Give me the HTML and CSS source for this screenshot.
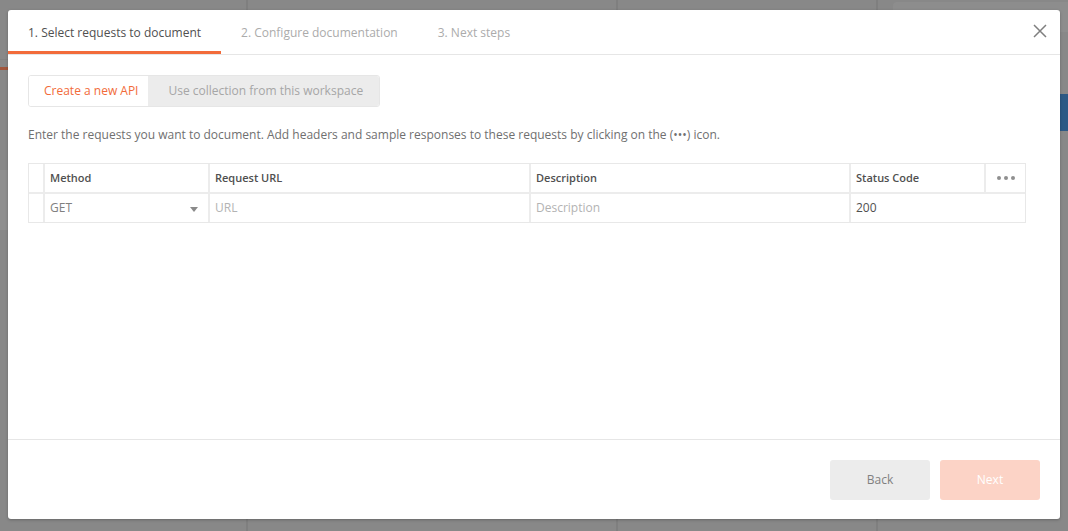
FILE: index.html
```html
<!DOCTYPE html>
<html>
<head>
<meta charset="utf-8">
<link rel="stylesheet" href="styles.css">
</head>
<body>
<div class="app">
  <div class="col col-a">
    <div class="col-a-top"></div>
    <div class="col-a-accent"></div>
    <div class="col-a-band"></div>
  </div>
  <div class="col col-b"></div>
  <div class="col col-c"></div>
  <div class="col col-d">
    <div class="col-d-top"></div>
    <div class="col-d-blue"></div>
  </div>
</div>

<div class="modal">
  <div class="tabs">
    <div class="tab active">1. Select requests to document</div>
    <div class="tab">2. Configure documentation</div>
    <div class="tab">3. Next steps</div>
    <button class="close" aria-label="Close">
      <svg width="14" height="14" viewBox="0 0 14 14"><path d="M1 1L13 13M13 1L1 13" stroke="#7f7f7f" stroke-width="1.5" fill="none"/></svg>
    </button>
  </div>
  <div class="content">
    <div class="toggle">
      <div class="toggle-btn on">Create a new API</div>
      <div class="toggle-btn off">Use collection from this workspace</div>
    </div>
    <p class="hint">Enter the requests you want to document. Add headers and sample responses to these requests by clicking on the (•••) icon.</p>
    <div class="grid">
      <div class="cell"></div>
      <div class="cell head">Method</div>
      <div class="cell head">Request URL</div>
      <div class="cell head">Description</div>
      <div class="cell head">Status Code</div>
      <div class="cell head dots"><span></span><span></span><span></span></div>

      <div class="cell"></div>
      <div class="cell val method">GET<span class="caret"></span></div>
      <div class="cell ph">URL</div>
      <div class="cell ph">Description</div>
      <div class="cell val wide">200</div>
    </div>
  </div>
  <div class="footer">
    <button class="btn back">Back</button>
    <button class="btn next">Next</button>
  </div>
</div>
</body>
</html>
```

FILE: styles.css
```css
* { box-sizing: border-box; }
html, body { margin: 0; height: 100%; }
body {
  background: #888888;
  font-family: "Open Sans", "Liberation Sans", sans-serif;
  overflow: hidden;
}
.app {
  display: flex;
  height: 531px;
}
.col { border-right: 2px solid #7f7f7f; }
.col-a { width: 248px; display: flex; flex-direction: column; }
.col-a-top { height: 60px; border-bottom: 1px solid #828282; border-top-right-radius: 8px; }
.col-a-accent { height: 3px; width: 8px; background: #a2573d; margin-top: 7px; }
.col-a-band { height: 60px; width: 8px; background: #8f8f8f; margin-top: 100px; }
.col-b { width: 370px; }
.col-c { width: 260px; }
.col-d { flex: 1; border-right: none; display: flex; flex-direction: column; align-items: flex-end; }
.col-d-top { height: 30px; width: 175px; background: #8d8d8d; margin-top: 2px; border-top-left-radius: 4px; }
.col-d-blue { width: 8px; height: 37px; background: #2d5985; margin-top: 62px; }

.modal {
  position: absolute;
  left: 8px;
  top: 10px;
  width: 1052px;
  height: 509px;
  background: #fff;
  border-radius: 3px;
  box-shadow: 0 1px 3px rgba(0,0,0,0.25);
  display: flex;
  flex-direction: column;
}
.tabs {
  display: flex;
  align-items: stretch;
  height: 45px;
  border-bottom: 1px solid #e6e6e6;
}
.tab {
  padding: 3px 20px 0;
  font-size: 12px;
  color: #ababab;
  display: flex;
  align-items: center;
  border-bottom: 3px solid transparent;
}
.tab.active {
  color: #505050;
  border-bottom-color: #f26b3a;
}
.close {
  margin-left: auto;
  margin-right: 13px;
  background: none;
  border: none;
  padding: 0;
  display: flex;
  align-items: center;
  margin-top: -2px;
}
.content {
  flex: 1;
  padding: 20px 20px;
}
.toggle {
  display: inline-flex;
  border: 1px solid #e6e6e6;
  border-radius: 3px;
  height: 32px;
  overflow: hidden;
}
.toggle-btn {
  font-size: 12px;
  display: flex;
  align-items: center;
  padding-bottom: 2px;
}
.toggle-btn.on { color: #f26b3a; background: #fff; padding-left: 15px; padding-right: 10px; }
.toggle-btn.off { color: #a6a6a6; background: #ececec; padding-left: 20px; padding-right: 16px; }
.hint {
  margin: 19px 0 20px;
  font-size: 12px;
  line-height: 17px;
  color: #707070;
}
.grid {
  width: 998px;
  display: grid;
  grid-template-columns: 14px 163px 319px 318px 133px 39px;
  grid-template-rows: 28px 28px;
  gap: 2px;
  background: #ececec;
  border: 1px solid #e8e8e8;
}
.cell {
  background: #fff;
  font-size: 12px;
  display: flex;
  align-items: center;
  padding: 0 5px 2px;
}
.cell.head { font-size: 11px; font-weight: 600; color: #505050; }
.cell.val { color: #808080; }
.cell.ph { color: #b3b3b3; }
.cell.wide { grid-column: span 2; color: #505050; }
.method { justify-content: space-between; padding-right: 10px; }
.caret {
  width: 0; height: 0;
  border-left: 4px solid transparent;
  border-right: 4px solid transparent;
  border-top: 5px solid #8a8a8a;
  margin-top: 4px;
}
.dots { justify-content: center; gap: 3px; padding: 0; }
.dots span { width: 4px; height: 4px; border-radius: 50%; background: #8f8f8f; }
.footer {
  height: 80px;
  border-top: 1px solid #e6e6e6;
  display: flex;
  justify-content: flex-end;
  align-items: flex-start;
  gap: 10px;
  padding: 20px 20px 0;
}
.btn {
  width: 100px;
  height: 40px;
  border: none;
  border-radius: 3px;
  font-family: "Open Sans", "Liberation Sans", sans-serif;
  font-size: 12px;
  padding: 0 0 2px;
}
.btn.back { background: #ececec; color: #808080; }
.btn.next { background: #fcd3c6; color: #fff; }
```
